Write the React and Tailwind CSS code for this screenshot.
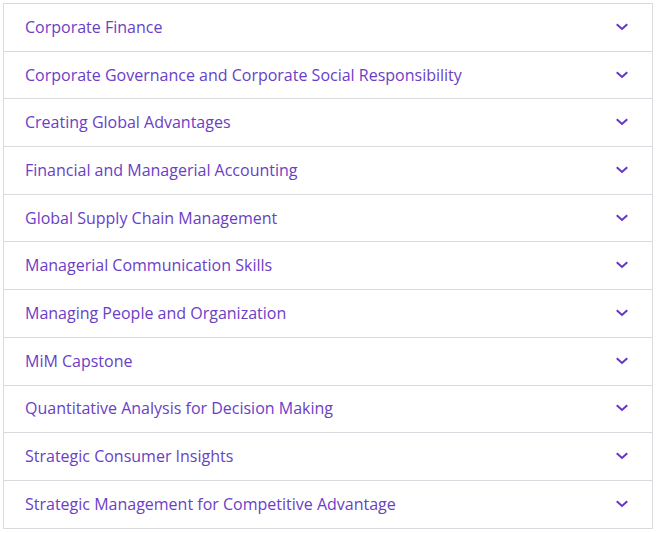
import React from "react";

const items = [
  "Corporate Finance",
  "Corporate Governance and Corporate Social Responsibility",
  "Creating Global Advantages",
  "Financial and Managerial Accounting",
  "Global Supply Chain Management",
  "Managerial Communication Skills",
  "Managing People and Organization",
  "MiM Capstone",
  "Quantitative Analysis for Decision Making",
  "Strategic Consumer Insights",
  "Strategic Management for Competitive Advantage",
];

function Chevron() {
  return (
    <svg width="12" height="8" viewBox="0 0 12 8" fill="none" className="shrink-0 mt-[-1px]">
      <path d="M1.5 2 L6 6 L10.5 2" stroke="#6234c6" strokeWidth="2" strokeLinecap="square" />
    </svg>
  );
}

export default function App() {
  return (
    <div className="bg-white w-[657px] h-[533px] pt-[3px] pl-[3px]" style={{ fontFamily: '"Open Sans", sans-serif' }}>
      <div className="w-[650px] border-x border-t border-[#dcdae0] flex flex-col">
        {items.map((t) => (
          <div
            key={t}
            className="flex items-center justify-between h-[47.7px] pl-[21px] pr-[24px] border-b border-[#dcdae0]"
          >
            <span className="text-[16px] leading-[20px] text-[#6a3ec6] mt-[-1px]">{t}</span>
            <Chevron />
          </div>
        ))}
      </div>
    </div>
  );
}
